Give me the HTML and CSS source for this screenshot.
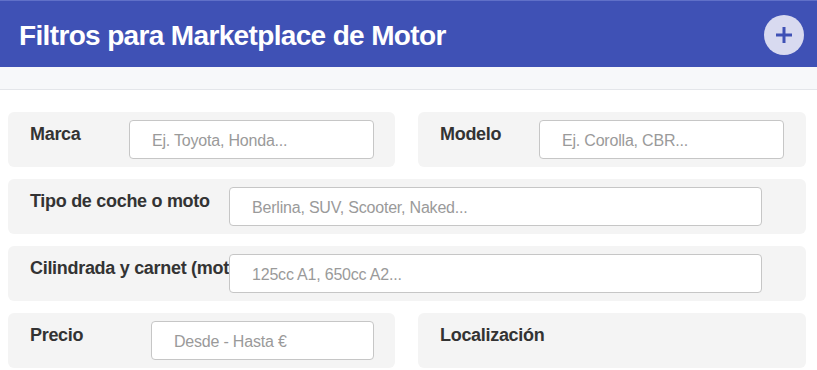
FILE: index.html
```html
<!DOCTYPE html>
<html lang="es">
<head>
<meta charset="utf-8">
<title>Filtros para Marketplace de Motor</title>
<link rel="stylesheet" href="styles.css">
</head>
<body>
<header class="topbar">
  <h1 class="topbar__title">Filtros para Marketplace de Motor</h1>
  <button class="topbar__add" type="button" aria-label="Añadir filtro">
    <svg viewBox="0 0 20 20" width="20" height="20" aria-hidden="true">
      <path d="M10 2v16M2 10h16" stroke="#3f51b5" stroke-width="3" stroke-linecap="butt" fill="none"/>
    </svg>
  </button>
</header>
<div class="subbar"></div>
<main class="filters">
  <div class="field field--brand">
    <label class="field__label">Marca</label>
    <input class="field__input" type="text" placeholder="Ej. Toyota, Honda...">
  </div>
  <div class="field field--brand">
    <label class="field__label">Modelo</label>
    <input class="field__input" type="text" placeholder="Ej. Corolla, CBR...">
  </div>
  <div class="field field--wide">
    <label class="field__label">Tipo de coche o moto</label>
    <input class="field__input" type="text" placeholder="Berlina, SUV, Scooter, Naked...">
  </div>
  <div class="field field--wide">
    <label class="field__label">Cilindrada y carnet (moto)</label>
    <input class="field__input" type="text" placeholder="125cc A1, 650cc A2...">
  </div>
  <div class="field field--price">
    <label class="field__label">Precio</label>
    <input class="field__input" type="text" placeholder="Desde - Hasta €">
  </div>
  <div class="field">
    <label class="field__label">Localización</label>
  </div>
</main>
</body>
</html>
```
FILE: styles.css
```css
* { box-sizing: border-box; }
html, body { margin: 0; padding: 0; background: #ffffff; }
body { font-family: "Liberation Sans", Arial, sans-serif; color: #333; }

.topbar {
  height: 67px;
  background: #3f51b5;
  border-top: 1px solid #6070c8;
  display: flex;
  align-items: center;
  justify-content: space-between;
  padding: 0 13px 0 19px;
}
.topbar__title {
  margin: 0 0 -3px 0;
  color: #fff;
  font-size: 28px;
  line-height: 32px;
  font-weight: 700;
  letter-spacing: -0.65px;
}
.topbar__add {
  width: 40px;
  height: 40px;
  border-radius: 50%;
  border: none;
  background: #d8daf0;
  display: flex;
  align-items: center;
  justify-content: center;
  padding: 0;
  margin-top: 1px;
}

.subbar {
  height: 23px;
  background: #f7f8fa;
  border-bottom: 1px solid #e4e6ea;
}

.filters {
  display: grid;
  grid-template-columns: 387px 388px;
  column-gap: 23px;
  row-gap: 12px;
  padding: 22px 11px 0 8px;
}

.field {
  height: 55px;
  background: #f4f4f4;
  border-radius: 6px;
  display: flex;
  align-items: flex-start;
  padding: 8px 21px 8px 22px;
}
.field--wide { grid-column: 1 / -1; }

.field__label {
  flex: 0 0 auto;
  margin-top: 3px;
  font-size: 18px;
  line-height: 22px;
  font-weight: 700;
  letter-spacing: -0.3px;
  color: #333;
  white-space: nowrap;
}
.field--brand .field__label { width: 99px; }
.field--wide .field__label { width: 199px; }
.field--price .field__label { width: 121px; }

.field__input {
  flex: 0 0 auto;
  height: 39px;
  border: 1px solid #c6c6c6;
  border-radius: 4px;
  background: #fff;
  padding: 2px 22px 0;
  font-family: "Liberation Sans", Arial, sans-serif;
  font-size: 16px;
  letter-spacing: -0.2px;
  color: #333;
  outline: none;
}
.field__input::placeholder { color: #9a9a9a; }
.field--brand .field__input { width: 245px; }
.field--wide .field__input { width: 533px; }
.field--price .field__input { width: 223px; }
```
